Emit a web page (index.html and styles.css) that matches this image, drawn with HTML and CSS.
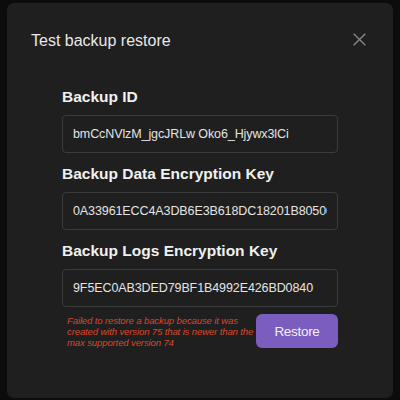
FILE: index.html
```html
<!DOCTYPE html>
<html>
<head>
<meta charset="utf-8">
<link rel="stylesheet" href="styles.css">
</head>
<body>
<div class="modal">
  <div class="header">
    <h1 class="title">Test backup restore</h1>
    <button class="close" aria-label="Close">
      <svg width="13" height="13" viewBox="0 0 13 13"><path d="M0.7 0.7 L12.3 12.3 M12.3 0.7 L0.7 12.3" stroke="#8a8a8a" stroke-width="1.3" fill="none"/></svg>
    </button>
  </div>
  <div class="form">
    <div class="field">
      <label class="label">Backup ID</label>
      <div class="input"><span class="value">bmCcNVlzM_jgcJRLw Oko6_Hjywx3lCi</span></div>
    </div>
    <div class="field">
      <label class="label">Backup Data Encryption Key</label>
      <div class="input"><span class="value">0A33961ECC4A3DB6E3B618DC18201B80500C</span></div>
    </div>
    <div class="field">
      <label class="label">Backup Logs Encryption Key</label>
      <div class="input"><span class="value">9F5EC0AB3DED79BF1B4992E426BD0840</span></div>
    </div>
    <div class="actions">
      <p class="error">Failed to restore a backup because it was<br>created with version 75 that is newer than the<br>max supported version 74</p>
      <button class="restore">Restore</button>
    </div>
  </div>
</div>
</body>
</html>
```
FILE: styles.css
```css
html, body {
  margin: 0;
  padding: 0;
  background: #0c0c0c;
  width: 400px;
  height: 400px;
  overflow: hidden;
  font-family: "Liberation Sans", Arial, sans-serif;
}
.modal {
  margin: 3px 7px 0 7px;
  width: 386px;
  height: 395px;
  background: #1f1f1f;
  border-radius: 7px;
  box-sizing: border-box;
  padding-top: 28px;
}
.header {
  display: flex;
  justify-content: space-between;
  align-items: flex-start;
  padding: 0 27px 0 24px;
}
.title {
  margin: 0;
  font-size: 16px;
  line-height: 20px;
  font-weight: normal;
  color: #e8e8e8;
}
.close {
  background: none;
  border: none;
  padding: 0;
  margin-top: 2px;
  width: 13px;
  height: 13px;
  display: block;
  cursor: pointer;
}
.close svg { display: block; }
.form {
  padding: 36px 55px 0 55px;
  display: flex;
  flex-direction: column;
}
.field {
  display: flex;
  flex-direction: column;
  margin-bottom: 11px;
}
.label {
  font-size: 15.5px;
  line-height: 20px;
  font-weight: bold;
  color: #f0f0f0;
  margin-bottom: 8px;
}
.input {
  height: 38px;
  box-sizing: border-box;
  border: 1px solid #3b3b3b;
  border-radius: 4px;
  padding: 0 10px;
  display: flex;
  align-items: center;
}
.value {
  display: block;
  flex: 1;
  min-width: 0;
  font-size: 12.5px;
  line-height: 36px;
  letter-spacing: -0.1px;
  color: #e4e4e4;
  white-space: nowrap;
  overflow: hidden;
}
.actions {
  display: flex;
  justify-content: space-between;
  align-items: flex-start;
  margin-top: -4px;
}
.error {
  margin: 1px 0 0 5px;
  font-size: 9.6px;
  line-height: 11px;
  letter-spacing: -0.15px;
  font-style: italic;
  color: #d9472b;
  white-space: nowrap;
}
.restore {
  flex-shrink: 0;
  width: 82px;
  height: 34px;
  border: none;
  border-radius: 6px;
  background: #7b5cbf;
  color: #f2f0f8;
  font-family: "Liberation Sans", Arial, sans-serif;
  font-size: 13.5px;
  letter-spacing: -0.3px;
  padding: 0;
}
```
